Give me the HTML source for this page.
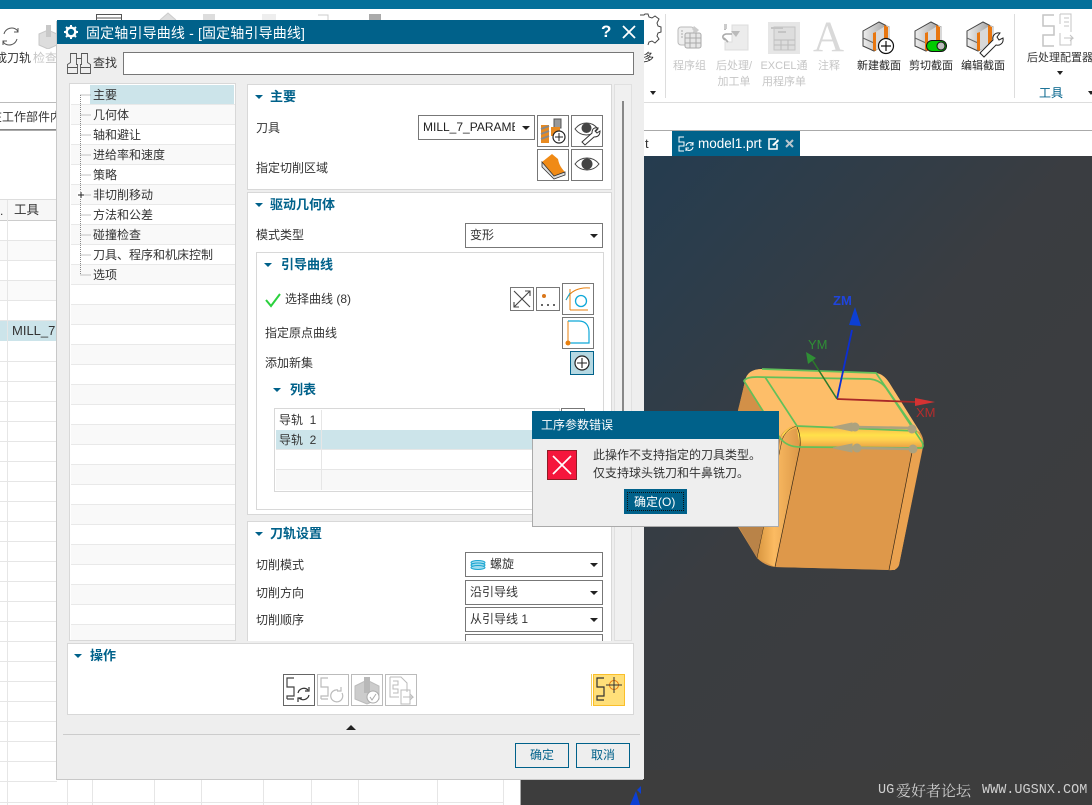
<!DOCTYPE html>
<html><head><meta charset="utf-8"><style>
html,body{margin:0;padding:0;background:#fff}
#p{position:relative;width:1092px;height:805px;overflow:hidden;font:12px/16px "Liberation Sans","Noto Sans CJK SC",sans-serif;color:#333}
#p div,#p svg{position:absolute}
.t{white-space:nowrap}
.g{color:#c6c6c6;text-align:center;line-height:16px}
.b{color:#222;text-align:center}
.h{font-weight:bold;color:#00618a;font-size:13px;white-space:nowrap}
.tri{width:0;height:0;border-left:4px solid transparent;border-right:4px solid transparent;border-top:4px solid #00618a}
.box{box-sizing:border-box;border:1px solid #777;background:#fff}
.dd{box-sizing:border-box;border:1px solid #777;background:#fff;height:25px;padding:3px 0 0 4px;white-space:nowrap}
.dd:after{content:"";position:absolute;right:4px;top:10px;border-left:4px solid transparent;border-right:4px solid transparent;border-top:4px solid #222}
.ib{box-sizing:border-box;border:1px solid #777;background:#fff}
.r{left:71px;width:164px;height:1px;background:#e9e9e9}
.alt{left:71px;width:164px;height:19px;background:#f9f9f9}
.gl{background:#e6e6e6;height:1px}
.gv{background:#e6e6e6;width:1px}
</style></head><body><div id="p">

<!-- top bar / ribbon -->
<div style="left:0;top:0;width:1092px;height:9px;background:#04709a"></div>
<div style="left:0;top:102px;width:1092px;height:1px;background:#ddd"></div>
<div style="left:0;top:130px;width:1092px;height:1px;background:#aaa"></div>
<div style="left:665px;top:14px;width:1px;height:84px;background:#ddd"></div>
<div style="left:1014px;top:14px;width:1px;height:84px;background:#ddd"></div>

<!-- left ribbon bits -->
<svg style="left:0;top:25px" width="60" height="24" viewBox="0 0 60 24"><path d="M4 9a8 8 0 0 1 13-4l1 2M17 14a8 8 0 0 1-13 4l-1-2M18 3v4h-4M3 20v-4h4" fill="none" stroke="#555" stroke-width="1"/><path d="M39 9l9-4 9 4v11l-9 4-9-4z" fill="#ddd" stroke="#c8c8c8"/><rect x="46" y="-10" width="5" height="22" fill="#c8c8c8"/></svg>
<div class="t" style="left:-5px;top:50px;color:#333">成刀轨</div>
<div class="t" style="left:33px;top:50px;color:#c6c6c6">检查</div>
<div class="t" style="left:-10px;top:109px">在工作部件内</div>
<div style="left:0;top:102px;width:57px;height:1px;background:#bbb"></div>
<div style="left:0;top:129px;width:57px;height:1px;background:#888"></div>
<svg style="left:90px;top:9px" width="300" height="12" viewBox="0 0 300 12"><rect x="6.5" y="5.5" width="25" height="10" fill="#fff" stroke="#555"/><path d="M6 9h26" stroke="#555"/><path d="M70 11l8-7 8 7" fill="#ddd" stroke="#ccc"/><rect x="113" y="5" width="12" height="8" fill="#ddd"/><rect x="172" y="5" width="14" height="8" fill="#eee"/><path d="M228 6h10v8" fill="none" stroke="#ccc"/><rect x="279" y="5" width="12" height="8" fill="#aaa"/></svg>

<!-- right ribbon: gear -->
<svg style="left:620px;top:10px" width="42" height="40" viewBox="620 10 42 40"><path d="M640 15h4l1 -1 3 0 1 3 3 1 3-2 4 3-2 4 1 3 3 1v5l-3 1-1 3 2 3-4 4-3-2-3 1-1 3" fill="none" stroke="#444" stroke-width="1"/></svg>
<div class="t" style="left:643px;top:50px;font-size:11px;color:#222">多</div>
<div style="left:650px;top:91px;border-left:3.5px solid transparent;border-right:3.5px solid transparent;border-top:4px solid #222"></div>

<!-- 程序组 -->
<svg style="left:675px;top:22px" width="30" height="30" viewBox="0 0 30 30"><rect x="3" y="5" width="16" height="18" rx="3" fill="#eee" stroke="#bbb"/><rect x="10" y="11" width="16" height="15" rx="2" fill="#e6e6e6" stroke="#aaa"/><path d="M10 16h16M10 21h16M15 11v15M21 11v15M6 9h2M6 12h2M6 15h2" stroke="#aaa"/><path d="M19 4l5 4-3 3-4-4z" fill="#ccc"/></svg>
<!-- 后处理 -->
<svg style="left:720px;top:22px" width="30" height="32" viewBox="0 0 30 32"><path d="M12 3h16v25H5V20h7z" fill="#ececec" stroke="#ddd"/><path d="M11 9l9 0-4 6z" fill="#bbb"/><path d="M5 2v6M5 18c-3-2-3-5 1-6h6M4 16l4 4" fill="none" stroke="#aaa" stroke-width="1.600"/><rect x="4" y="2" width="3" height="5" fill="#ccc"/></svg>
<!-- excel -->
<div style="left:768px;top:22px;width:32px;height:32px;background:#e6e6e6"></div>
<svg style="left:768px;top:22px" width="32" height="32" viewBox="0 0 32 32"><rect x="6" y="5" width="21" height="23" fill="#ddd" stroke="#c4c4c4"/><path d="M6 18h21M6 23h21M13 18v10M20 18v10" stroke="#bbb"/><path d="M3 6h12M10 10h8" stroke="#c4c4c4" stroke-width="2"/></svg>
<div class="t" style="left:813px;top:15px;font:43px/46px 'Liberation Serif',serif;color:#d9d9d9">A</div>

<div class="g t" style="left:673px;top:58px;font-size:11px">程序组</div>
<div class="g" style="left:712px;top:58px;width:44px;font-size:11px">后处理/<br>加工单</div>
<div class="g" style="left:760px;top:58px;width:48px;font-size:11px">EXCEL通<br>用程序单</div>
<div class="g t" style="left:818px;top:58px;font-size:11px">注释</div>

<!-- section icons -->
<svg style="left:860px;top:20px" width="45" height="36" viewBox="0 0 45 36"><defs><linearGradient id="s" x1="0" x2="1"><stop offset="0" stop-color="#eee"/><stop offset="1" stop-color="#999"/></linearGradient></defs><path d="M3 11l16-9 10 5v15L14 31 3 26z" fill="url(#s)" stroke="#444"/><path d="M3 18l11 5v8" fill="none" stroke="#666"/><path d="M14 13l13-8 3 3v16l-14 6-2-1z" fill="#d8d8d8"/><path d="M24 5l4 2v15l-4 2z" fill="#e8760f"/><path d="M13 13v17l3 1V12z" fill="#e8760f"/><circle cx="26" cy="26" r="7.500" fill="#fff" stroke="#111" stroke-width="1.200"/><path d="M21 26h10M26 21v10" stroke="#111" stroke-width="1.200"/></svg>
<svg style="left:912px;top:20px" width="45" height="36" viewBox="0 0 45 36"><path d="M3 11l16-9 10 5v15L14 31 3 26z" fill="url(#s)" stroke="#444"/><path d="M3 18l11 5v8" fill="none" stroke="#666"/><path d="M14 13l13-8 3 3v16l-14 6-2-1z" fill="#d8d8d8"/><path d="M24 5l4 2v15l-4 2z" fill="#e8760f"/><path d="M13 13v17l3 1V12z" fill="#e8760f"/><rect x="14.500" y="20.500" width="20" height="11" rx="5.500" fill="#0c0" stroke="#111"/><circle cx="29" cy="26" r="4" fill="#bbb" stroke="#111"/></svg>
<svg style="left:964px;top:20px" width="45" height="38" viewBox="0 0 45 38"><path d="M3 11l16-9 10 5v15L14 31 3 26z" fill="url(#s)" stroke="#444"/><path d="M3 18l11 5v8" fill="none" stroke="#666"/><path d="M14 13l13-8 3 3v16l-14 6-2-1z" fill="#d8d8d8"/><path d="M24 5l4 2v15l-4 2z" fill="#e8760f"/><path d="M13 13v17l3 1V12z" fill="#e8760f"/><path d="M16 33l13-13c-1-4 2-8 7-7l-3 4 2 3 4-2c1 5-3 8-7 7L20 37z" fill="#fff" stroke="#222"/></svg>
<div class="b t" style="left:857px;top:58px;font-size:11px">新建截面</div>
<div class="b t" style="left:909px;top:58px;font-size:11px">剪切截面</div>
<div class="b t" style="left:961px;top:58px;font-size:11px">编辑截面</div>

<!-- post config -->
<svg style="left:1040px;top:12px" width="36" height="36" viewBox="0 0 36 36"><path d="M14 3H3v11h11v9H3v11h11" fill="none" stroke="#c4c4c4" stroke-width="1.500"/><path d="M20 2h11v18M20 2v10M24 6h5M24 10h5M24 14h5" fill="none" stroke="#c4c4c4"/><path d="M20 21v12h11v-7M24 26h9l-3-3M33 26l-3 3" fill="none" stroke="#c4c4c4"/></svg>
<div class="t" style="left:1027px;top:50px;color:#333;font-size:11px">后处理配置器</div>
<div style="left:1057px;top:71px;border-left:3px solid transparent;border-right:3px solid transparent;border-top:4px solid #222"></div>
<div class="t" style="left:1039px;top:85px;color:#00618a">工具</div>
<div style="left:1088px;top:91px;border-left:3.5px solid transparent;border-right:3.5px solid transparent;border-top:4px solid #222"></div>

<!-- tab row -->
<div style="left:672px;top:131px;width:128px;height:25px;background:#00628b"></div>
<svg style="left:677px;top:135px" width="20" height="18" viewBox="0 0 20 18"><path d="M7 2H2v5h5v4H2v5h5" fill="none" stroke="#fff"/><path d="M9 11a4 4 0 0 1 7-2M16 12a4 4 0 0 1-7 2M16 7v3h-3M9 16v-3h3" fill="none" stroke="#fff"/></svg>
<div class="t" style="left:698px;top:136px;color:#fff;font-size:13.500px">model1.prt</div>
<svg style="left:768px;top:137px" width="30" height="14" viewBox="0 0 30 14"><path d="M8 2H1v10h8V7" fill="none" stroke="#fff" stroke-width="1.500"/><path d="M4 8l6-6 1 2-5 5z" fill="#fff"/><path d="M18 3l7 7M25 3l-7 7" stroke="#b9c6cd" stroke-width="2"/></svg>

<!-- grid table left -->
<div style="left:0;top:199px;width:57px;height:1px;background:#ddd"></div>
<div style="left:0;top:200px;width:57px;height:20px;background:#f7f7f7"></div>
<div style="left:0;top:220px;width:57px;height:1px;background:#ccc"></div>
<div class="t" style="left:14px;top:202px;font-size:12.500px">工具</div>
<div class="t" style="left:0;top:203px">.</div>
<div style="left:0;top:241px;width:57px;height:19px;background:#fafafa"></div>
<div style="left:0;top:281px;width:57px;height:19px;background:#fafafa"></div>
<div class="gl" style="left:0;top:240px;width:57px"></div>
<div class="gl" style="left:0;top:260px;width:57px"></div>
<div class="gl" style="left:0;top:280px;width:57px"></div>
<div class="gl" style="left:0;top:300px;width:57px"></div>
<div class="gl" style="left:0;top:320px;width:57px"></div>
<div style="left:0;top:321px;width:57px;height:20px;background:#cce4ea"></div>
<div class="t" style="left:12px;top:323px;font-size:13px">MILL_7...</div>
<div class="gl" style="left:0;top:361px;width:57px"></div>
<div class="gl" style="left:0;top:381px;width:57px"></div>
<div class="gl" style="left:0;top:401px;width:57px"></div>
<div class="gl" style="left:0;top:421px;width:57px"></div>
<div class="gl" style="left:0;top:441px;width:57px"></div>
<div class="gl" style="left:0;top:461px;width:57px"></div>
<div class="gl" style="left:0;top:481px;width:57px"></div>
<div class="gl" style="left:0;top:501px;width:57px"></div>
<div class="gl" style="left:0;top:521px;width:57px"></div>
<div class="gl" style="left:0;top:541px;width:57px"></div>
<div class="gl" style="left:0;top:561px;width:57px"></div>
<div class="gl" style="left:0;top:581px;width:57px"></div>
<div class="gl" style="left:0;top:601px;width:57px"></div>
<div class="gl" style="left:0;top:621px;width:57px"></div>
<div class="gl" style="left:0;top:641px;width:57px"></div>
<div class="gl" style="left:0;top:661px;width:57px"></div>
<div class="gl" style="left:0;top:681px;width:57px"></div>
<div class="gl" style="left:0;top:701px;width:57px"></div>
<div class="gl" style="left:0;top:721px;width:57px"></div>
<div class="gl" style="left:0;top:741px;width:57px"></div>
<div class="gl" style="left:0;top:761px;width:57px"></div>
<div class="gl" style="left:0;top:781px;width:57px"></div>
<div class="gv" style="left:7px;top:200px;height:605px"></div>
<div class="gl" style="left:0;top:802px;width:503px"></div>
<div class="gv" style="left:67px;top:779px;height:26px"></div>
<div class="gv" style="left:92px;top:779px;height:26px"></div>
<div class="gv" style="left:154px;top:779px;height:26px"></div>
<div class="gv" style="left:201px;top:779px;height:26px"></div>
<div class="gv" style="left:263px;top:779px;height:26px"></div>
<div class="gv" style="left:311px;top:779px;height:26px"></div>
<div class="gv" style="left:358px;top:779px;height:26px"></div>
<div class="gv" style="left:437px;top:779px;height:26px"></div>
<div class="gv" style="left:503px;top:779px;height:26px"></div>
<div style="left:520px;top:779px;width:1px;height:26px;background:#aaa"></div>

<!-- viewport -->
<div style="left:521px;top:156px;width:571px;height:649px;background:linear-gradient(132deg,#1f3b52 0%,#2b3d4c 22%,#3a3d41 48%,#3d3d3d 100%)"></div>
<div style="left:521px;top:770px;width:571px;height:35px;background:#3d3d3d"></div>

<svg style="left:0;top:0" width="1092" height="805" viewBox="0 0 1092 805">
<defs>
<linearGradient id="st" x1="0" y1="0" x2="0" y2="1"><stop offset="0" stop-color="#f7b24e"/><stop offset=".4" stop-color="#ffe14a"/><stop offset=".6" stop-color="#ffd050"/><stop offset="1" stop-color="#e59a42"/></linearGradient>
<linearGradient id="ed" x1="0" x2="1" y1="0" y2="0"><stop offset="0" stop-color="#d8953f"/><stop offset=".4" stop-color="#fbbb62"/><stop offset="1" stop-color="#dc9848"/></linearGradient>
</defs>
<path d="M745 382Q748 369 762 369L876 373Q884 374 890 384L920 432Q925 440 923 447L899 565Q897 571 888 570L775 567Q765 566 757 558L735 522 738 410Z" fill="#d9964a"/>
<path d="M745 381L738 412 736 522 757 558 780 440Z" fill="#b98348"/>
<path d="M745 381L738 412 738 440 770 440 780 437Z" fill="#d29048"/>
<path d="M745 381Q747 369 762 369L876 373Q884 374 890 384L920 432 913 430 797 426Q785 427 780 437Z" fill="#fdbe69"/>
<path d="M781 437Q787 425 797 426L912 429Q920 432 923 443L921 449 800 447Q785 446 781 437Z" fill="url(#st)"/>
<path d="M781 437Q795 426 797 429L800 447 775 567 757 558Z" fill="url(#ed)"/>
<path d="M800 447L913 449 895 570 775 567Z" fill="#de984a"/>
<path d="M913 449L923 445 899 565Q897 571 889 570Z" fill="#eaa250"/>
<path d="M800 447L775 567M913 447L889 570M797 427Q801 435 800 447" fill="none" stroke="#3a2a18" stroke-width=".7"/>
<path d="M757 558L781 445Q783 430 797 426" fill="none" stroke="#3a2a18" stroke-width=".5"/>
<path d="M762 369L876 373 916 431 797 426 765 377" fill="none" stroke="#62c05a" stroke-width="1.700"/>
<path d="M744 381Q746 377 757 377L870 379Q880 380 886 388L922 442Q924 446 922 448L800 447Q787 447 780 438Z" fill="none" stroke="#62c05a" stroke-width="1.700"/>
<g fill="#aca27f" stroke="#aca27f"><path d="M912 428L855 427" stroke-width="2.600"/><path d="M833 427L852 423V431Z"/><circle cx="855" cy="427" r="4"/><circle cx="912" cy="429" r="4"/><path d="M913 449L857 448" stroke-width="2.600"/><path d="M833 448L852 444V452Z"/><circle cx="857" cy="448" r="4"/><circle cx="913" cy="449" r="4"/></g>
<path d="M837 399L852 330" stroke="#0c2fd4" stroke-width="1.800"/><path d="M855 307L861 326 849 325Z" fill="#0c3fd4"/>
<path d="M837 399L811 358" stroke="#2b7a2a" stroke-width="1.500"/><path d="M806 352L816 358 808 364 Z" fill="#2f8f35"/>
<path d="M837 399L915 402" stroke="#a82828" stroke-width="1.800"/><path d="M935 402L915 398V406Z" fill="#d43333"/>
<text x="833" y="305" font-family="Liberation Sans" font-size="13" font-weight="bold" fill="#1f45dc">ZM</text>
<text x="808" y="349" font-family="Liberation Sans" font-size="13" fill="#2f8f35">YM</text>
<text x="916" y="417" font-family="Liberation Sans" font-size="13" fill="#b52c2c">XM</text>
<path d="M637 790l4-4v8zM630 805l6-14 4 14z" fill="#0c3fd4"/>
</svg>
<div class="t" style="left:878px;top:783px;font:13.500px/16px 'Liberation Mono',monospace;color:#cfcfcf">UG</div>
<div class="t" style="left:896px;top:783px;font:15px/16px 'Noto Serif CJK SC',serif;color:#cfcfcf">爱好者论坛</div>
<div class="t" style="left:982px;top:783px;font:13.500px/16px 'Liberation Mono',monospace;color:#cfcfcf">WWW.UGSNX.COM</div>

<!-- main dialog -->
<div style="left:57px;top:20px;width:587px;height:759px;background:#eee;box-shadow:-1px 1px 0 0 #c8c8c8"></div>
<div style="left:57px;top:20px;width:587px;height:24px;background:#00618a"></div>
<svg style="left:63px;top:24px" width="16" height="16" viewBox="0 0 16 16"><circle cx="8" cy="8" r="4.300" fill="none" stroke="#fff" stroke-width="2.400"/><path d="M8 1v3M8 12v3M1 8h3M12 8h3M3 3l2 2M11 11l2 2M13 3l-2 2M5 11l-2 2" stroke="#fff" stroke-width="2"/></svg>
<div class="t" style="left:86px;top:25px;color:#fff;font-size:14px;letter-spacing:.15px">固定轴引导曲线 - [固定轴引导曲线]</div>
<div class="t" style="left:601px;top:24px;color:#fff;font-weight:bold;font-size:17px">?</div>
<svg style="left:622px;top:25px" width="14" height="14" viewBox="0 0 14 14"><path d="M1 1l12 12M13 1L1 13" stroke="#fff" stroke-width="1.800"/></svg>
<div class="t" style="left:645px;top:136px;font-size:13px">t</div>

<svg style="left:67px;top:52px" width="24" height="24" viewBox="0 0 24 24"><path d="M3.500 1.500h6v11h1v9h-10v-9l3-2zM14.500 1.500h6v9l3 2v9h-10v-9h1zM9.500 6.500h5M.5 15.500h10M13.500 15.500h10" fill="none" stroke="#555" stroke-width=".9"/></svg>
<div class="t" style="left:93px;top:55px">查找</div>
<div class="box" style="left:123px;top:52px;width:511px;height:23px"></div>

<!-- tree -->
<div style="left:69px;top:83px;width:167px;height:558px;box-sizing:border-box;background:#fff;border:1px solid #d8d8d8"></div>
<div style="left:90px;top:85px;width:144px;height:19px;background:#cce4ea"></div>
<div class="alt" style="top:105px"></div>
<div class="alt" style="top:145px"></div>
<div class="alt" style="top:185px"></div>
<div class="alt" style="top:225px"></div>
<div class="alt" style="top:265px"></div>
<div class="alt" style="top:305px"></div>
<div class="alt" style="top:345px"></div>
<div class="alt" style="top:385px"></div>
<div class="alt" style="top:425px"></div>
<div class="alt" style="top:465px"></div>
<div class="alt" style="top:505px"></div>
<div class="alt" style="top:545px"></div>
<div class="alt" style="top:585px"></div>
<div class="alt" style="top:625px;height:15px"></div>
<div class="r" style="top:104px"></div><div class="r" style="top:124px"></div><div class="r" style="top:144px"></div><div class="r" style="top:164px"></div><div class="r" style="top:184px"></div><div class="r" style="top:204px"></div><div class="r" style="top:224px"></div><div class="r" style="top:244px"></div><div class="r" style="top:264px"></div><div class="r" style="top:284px"></div><div class="r" style="top:304px"></div><div class="r" style="top:324px"></div><div class="r" style="top:344px"></div><div class="r" style="top:364px"></div><div class="r" style="top:384px"></div><div class="r" style="top:404px"></div><div class="r" style="top:424px"></div><div class="r" style="top:444px"></div><div class="r" style="top:464px"></div><div class="r" style="top:484px"></div><div class="r" style="top:504px"></div><div class="r" style="top:524px"></div><div class="r" style="top:544px"></div><div class="r" style="top:564px"></div><div class="r" style="top:584px"></div><div class="r" style="top:604px"></div><div class="r" style="top:624px"></div>
<svg style="left:70px;top:85px" width="22" height="200" viewBox="0 0 22 200"><path d="M10.500 10V190M10.500 10H21M10.500 30H21M10.500 50H21M10.500 70H21M10.500 90H21M10.500 110H21M10.500 130H21M10.500 150H21M10.500 170H21M10.500 190H21" stroke="#888" stroke-dasharray="1 1" fill="none"/><rect x="7.500" y="106.500" width="7" height="7" fill="#fff"/><path d="M8 110h6M11 107v6" stroke="#222"/></svg>
<div class="t" style="left:93px;top:87px">主要</div>
<div class="t" style="left:93px;top:107px">几何体</div>
<div class="t" style="left:93px;top:127px">轴和避让</div>
<div class="t" style="left:93px;top:147px">进给率和速度</div>
<div class="t" style="left:93px;top:167px">策略</div>
<div class="t" style="left:93px;top:187px">非切削移动</div>
<div class="t" style="left:93px;top:207px">方法和公差</div>
<div class="t" style="left:93px;top:227px">碰撞检查</div>
<div class="t" style="left:93px;top:247px">刀具、程序和机床控制</div>
<div class="t" style="left:93px;top:267px">选项</div>

<!-- right scrollbar -->
<div style="left:614px;top:84px;width:18px;height:557px;background:#f0f0f0;border:1px solid #e0e0e0;box-sizing:border-box"></div>
<div style="left:622px;top:101px;width:2px;height:379px;background:#888"></div>

<!-- section: main -->
<div style="left:247px;top:84px;width:365px;height:106px;box-sizing:border-box;background:#fff;border:1px solid #d8d8d8"></div>
<div class="tri" style="left:255px;top:95px"></div>
<div class="h" style="left:270px;top:89px">主要</div>
<div class="t" style="left:256px;top:120px">刀具</div>
<div class="t" style="left:256px;top:160px">指定切削区域</div>
<div class="dd" style="left:418px;top:115px;width:117px;overflow:hidden;color:#222"><span style="display:inline-block;width:92px;overflow:hidden">MILL_7_PARAMETER</span></div>
<div class="ib" style="left:537px;top:115px;width:32px;height:32px"></div>
<svg style="left:537px;top:115px" width="32" height="32" viewBox="0 0 32 32"><path d="M4 10h8v18H4z" fill="#e88a20"/><path d="M4 14l8-3M4 19l8-3M4 24l8-3" stroke="#888" stroke-width="2"/><rect x="17" y="4" width="7" height="9" fill="#999" stroke="#555"/><path d="M14 12h9v9h-9z" fill="#e88a20"/><circle cx="22" cy="22" r="6" fill="#fff" stroke="#222" stroke-width="1.200"/><path d="M18 22h8M22 18v8" stroke="#222"/></svg>
<div class="ib" style="left:571px;top:115px;width:32px;height:32px"></div>
<svg style="left:571px;top:115px" width="32" height="32" viewBox="0 0 32 32"><path d="M4 14c6-8 17-8 23 0-6 8-17 8-23 0z" fill="#fff" stroke="#444"/><circle cx="15.500" cy="13" r="5" fill="#444"/><path d="M11 27l10-9c0-4 2-6 6-5l-3 3 2 2 3-2c0 5-3 6-6 6l-9 8z" fill="#fff" stroke="#333"/></svg>
<div class="ib" style="left:537px;top:149px;width:32px;height:32px"></div>
<svg style="left:537px;top:149px" width="32" height="32" viewBox="0 0 32 32"><path d="M5 13l10-8 6 5c1 6 4 10 7 13l-11 4z" fill="#f08a15"/><path d="M5 13l12 14 11-4v3L17 30 5 18z" fill="#ddd" stroke="#333" stroke-width=".8"/></svg>
<div class="ib" style="left:571px;top:149px;width:32px;height:32px"></div>
<svg style="left:571px;top:149px" width="32" height="32" viewBox="0 0 32 32"><path d="M4 15c6-8 18-8 24 0-6 8-18 8-24 0z" fill="#fff" stroke="#444"/><circle cx="16" cy="15" r="5.500" fill="#444"/></svg>

<!-- section: drive -->
<div style="left:247px;top:192px;width:365px;height:323px;box-sizing:border-box;background:#fff;border:1px solid #d8d8d8"></div>
<div class="tri" style="left:255px;top:203px"></div>
<div class="h" style="left:270px;top:197px">驱动几何体</div>
<div class="t" style="left:256px;top:227px">模式类型</div>
<div class="dd" style="left:465px;top:223px;width:138px">变形</div>

<div style="left:256px;top:252px;width:348px;height:258px;box-sizing:border-box;border:1px solid #d8d8d8"></div>
<div class="tri" style="left:264px;top:263px"></div>
<div class="h" style="left:281px;top:257px">引导曲线</div>
<svg style="left:265px;top:292px" width="18" height="16" viewBox="0 0 18 16"><path d="M1 8l5 6L15 2" fill="none" stroke="#2bd13e" stroke-width="2"/></svg>
<div class="t" style="left:285px;top:291px">选择曲线 (8)</div>
<div class="t" style="left:265px;top:325px">指定原点曲线</div>
<div class="t" style="left:265px;top:355px">添加新集</div>

<div class="ib" style="left:510px;top:287px;width:24px;height:24px"></div>
<svg style="left:510px;top:287px" width="24" height="24" viewBox="0 0 24 24"><path d="M4 4l16 16M20 4L4 20M15 4h5v5M4 15v5h5" fill="none" stroke="#444" stroke-width="1.100"/></svg>
<div class="ib" style="left:536px;top:287px;width:24px;height:24px"></div>
<svg style="left:536px;top:287px" width="24" height="24" viewBox="0 0 24 24"><circle cx="8" cy="9" r="2" fill="#d9761a"/><path d="M5 18h2M11 18h2M17 18h2" stroke="#333" stroke-width="1.600"/></svg>
<div class="ib" style="left:562px;top:283px;width:32px;height:32px"></div>
<svg style="left:562px;top:283px" width="32" height="32" viewBox="0 0 32 32"><path d="M8 27V6" stroke="#e8800f" fill="none"/><path d="M8 27h18" stroke="#e8800f"/><path d="M4 17C8 8 17 4 28 5" fill="none" stroke="#e8800f"/><circle cx="19" cy="18" r="5.500" fill="none" stroke="#0fa8d8" stroke-width="1.300"/><path d="M4 17L8 10" stroke="#0fa8d8"/></svg>
<div class="ib" style="left:562px;top:317px;width:32px;height:32px"></div>
<svg style="left:562px;top:317px" width="32" height="32" viewBox="0 0 32 32"><path d="M6 25V4" stroke="#e8800f" fill="none"/><path d="M6 4h11c7 0 10 5 10 11v11H6" fill="none" stroke="#0fa8d8" stroke-width="1.200"/><circle cx="6" cy="26" r="2.500" fill="#e8800f"/></svg>
<div class="box" style="left:570px;top:351px;width:24px;height:24px;background:#b5d8e2;border-color:#00618a"></div>
<svg style="left:570px;top:351px" width="24" height="24" viewBox="0 0 24 24"><circle cx="12" cy="12" r="7" fill="#fff" stroke="#222" stroke-width="1.200"/><path d="M7 12h10M12 7v10" stroke="#222" stroke-width="1.100"/></svg>

<div class="tri" style="left:273px;top:388px"></div>
<div class="h" style="left:290px;top:382px">列表</div>
<div style="left:274px;top:408px;width:286px;height:84px;box-sizing:border-box;border:1px solid #d8d8d8;background:#fff"></div>
<div style="left:276px;top:430px;width:284px;height:19px;background:#cce4ea"></div>
<div style="left:276px;top:470px;width:284px;height:20px;background:#f8f8f8"></div>
<div style="left:276px;top:449px;width:284px;height:1px;background:#e6e6e6"></div>
<div style="left:276px;top:469px;width:284px;height:1px;background:#e6e6e6"></div>
<div style="left:321px;top:410px;width:1px;height:80px;background:#e6e6e6"></div>
<div class="t" style="left:279px;top:412px">导轨&nbsp; 1</div>
<div class="t" style="left:279px;top:432px">导轨&nbsp; 2</div>
<div class="box" style="left:561px;top:408px;width:24px;height:10px"></div>

<!-- section: path -->
<div style="left:247px;top:521px;width:365px;height:120px;box-sizing:border-box;background:#fff;border:1px solid #d8d8d8;border-bottom:0"></div>
<div class="tri" style="left:255px;top:532px"></div>
<div class="h" style="left:270px;top:526px">刀轨设置</div>
<div class="t" style="left:256px;top:557px">切削模式</div>
<div class="t" style="left:256px;top:585px">切削方向</div>
<div class="t" style="left:256px;top:612px">切削顺序</div>
<div class="dd" style="left:465px;top:552px;width:138px;padding-left:24px">螺旋</div>
<svg style="left:470px;top:560px" width="16" height="10" viewBox="0 0 16 10"><ellipse cx="8" cy="2.500" rx="7" ry="2" fill="#9fdcef" stroke="#1aa5d0"/><ellipse cx="8" cy="5" rx="7" ry="2" fill="#9fdcef" stroke="#1aa5d0"/><ellipse cx="8" cy="7.500" rx="7" ry="2" fill="#9fdcef" stroke="#1aa5d0"/></svg>
<div class="dd" style="left:465px;top:580px;width:138px">沿引导线</div>
<div class="dd" style="left:465px;top:607px;width:138px">从引导线 1</div>
<div style="left:465px;top:634px;width:138px;height:7px;box-sizing:border-box;border:1px solid #777;border-bottom:0;background:#fff"></div>

<!-- operations -->
<div style="left:67px;top:643px;width:567px;height:72px;box-sizing:border-box;background:#fff;border:1px solid #d8d8d8"></div>
<div class="tri" style="left:74px;top:654px"></div>
<div class="h" style="left:90px;top:648px">操作</div>
<div class="ib" style="left:283px;top:674px;width:32px;height:32px;border-color:#666"></div>
<svg style="left:283px;top:674px" width="32" height="32" viewBox="0 0 32 32"><path d="M11 4H4v9h7v9H4v3M4 25h7" fill="none" stroke="#444" stroke-width="1.200"/><path d="M15 19a6 6 0 0 1 10-3M26 21a6 6 0 0 1-10 3M26 13v4h-4M15 28v-4h4" fill="none" stroke="#333" stroke-width="1.200"/></svg>
<div class="ib" style="left:317px;top:674px;width:32px;height:32px;border-color:#bbb"></div>
<svg style="left:317px;top:674px" width="32" height="32" viewBox="0 0 32 32"><path d="M11 4H4v9h7v9H4v3M4 25h7" fill="none" stroke="#bbb" stroke-width="1.200"/><path d="M25 19a6 6 0 1 1-4-3M24 13v4h-4" fill="none" stroke="#bbb" stroke-width="1.200"/></svg>
<div class="ib" style="left:351px;top:674px;width:32px;height:32px;border-color:#bbb"></div>
<svg style="left:351px;top:674px" width="32" height="32" viewBox="0 0 32 32"><path d="M4 12l12-6 12 6v13l-12 5-12-5z" fill="#ccc" stroke="#bbb"/><rect x="13" y="3" width="6" height="16" fill="#b8b8b8"/><circle cx="22" cy="23" r="6" fill="#fff" stroke="#aaa"/><path d="M19 23l2 3 4-6" fill="none" stroke="#aaa"/></svg>
<div class="ib" style="left:385px;top:674px;width:32px;height:32px;border-color:#bbb"></div>
<svg style="left:385px;top:674px" width="32" height="32" viewBox="0 0 32 32"><path d="M5 3h11l6 6v9M5 3v20h9" fill="none" stroke="#bbb"/><path d="M8 7h5v4H8v4h5v4H8" fill="none" stroke="#bbb"/><path d="M16 16h9v14H16zM18 23h10l-3-3M28 23l-3 3" fill="none" stroke="#bbb"/></svg>
<div style="left:591px;top:674px;width:1px;height:32px;background:#f5cf5c"></div>
<div style="left:593px;top:674px;width:32px;height:32px;box-sizing:border-box;background:#ffdf79;border:1px solid #fabf2a"></div>
<svg style="left:593px;top:674px" width="32" height="32" viewBox="0 0 32 32"><path d="M11 4H4v9h7v9H4v4h7" fill="none" stroke="#333" stroke-width="1.200"/><circle cx="21" cy="11" r="4.500" fill="none" stroke="#e8760f"/><path d="M13 11h16M21 3v16" stroke="#333"/></svg>

<div style="left:346px;top:725px;border-left:5px solid transparent;border-right:5px solid transparent;border-bottom:5px solid #222"></div>
<div style="left:63px;top:734px;width:577px;height:1px;background:#ccc"></div>
<div class="box" style="left:515px;top:743px;width:54px;height:25px;border-color:#00618a;background:#eee;color:#00618a;text-align:center;line-height:23px">确定</div>
<div class="box" style="left:576px;top:743px;width:54px;height:25px;border-color:#00618a;background:#eee;color:#00618a;text-align:center;line-height:23px">取消</div>

<!-- error dialog -->
<div style="left:532px;top:411px;width:247px;height:116px;box-sizing:border-box;background:#eee;border:1px solid #aaa"></div>
<div style="left:532px;top:411px;width:247px;height:28px;background:#00618a"></div>
<div class="t" style="left:541px;top:417px;color:#fff;font-size:12px">工序参数错误</div>
<div style="left:547px;top:450px;width:30px;height:30px;box-sizing:border-box;background:#f5163c;border:1px solid #8e1c25"></div>
<svg style="left:547px;top:450px" width="30" height="30" viewBox="0 0 30 30"><path d="M6 6l18 18M24 6L6 24" stroke="#fff" stroke-width="1.700"/></svg>
<div class="t" style="left:593px;top:447px">此操作不支持指定的刀具类型。</div>
<div class="t" style="left:593px;top:465px">仅支持球头铣刀和牛鼻铣刀。</div>
<div style="left:624px;top:489px;width:63px;height:25px;background:#00618a"></div>
<div style="left:627px;top:492px;width:57px;height:19px;box-sizing:border-box;border:1px dotted #111"></div>
<div class="t" style="left:634px;top:494px;color:#fff">确定(O)</div>

</div></body></html>
